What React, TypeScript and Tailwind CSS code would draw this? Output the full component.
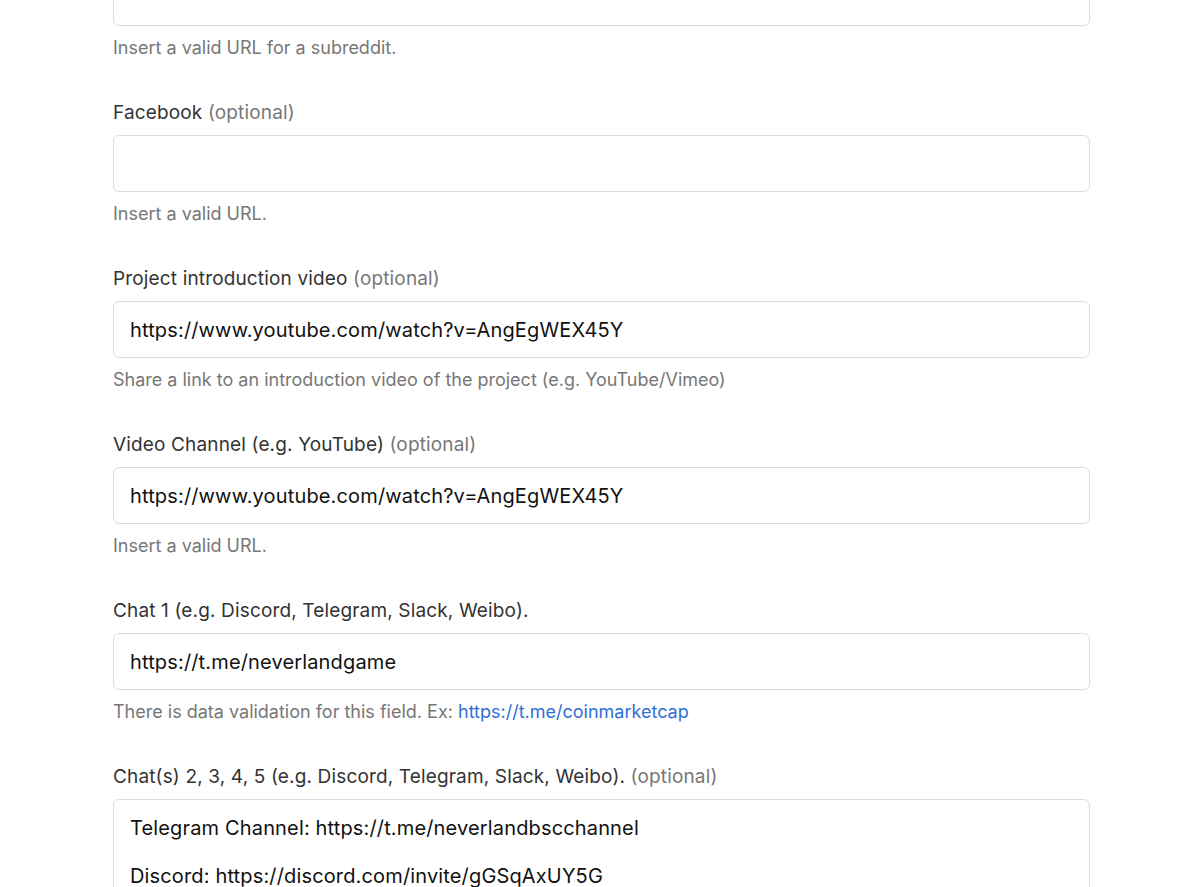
const fields = [
  {
    label: "Facebook",
    optional: true,
    value: "",
    help: "Insert a valid URL.",
  },
  {
    label: "Project introduction video",
    optional: true,
    value: "https://www.youtube.com/watch?v=AngEgWEX45Y",
    help: "Share a link to an introduction video of the project (e.g. YouTube/Vimeo)",
  },
  {
    label: "Video Channel (e.g. YouTube)",
    optional: true,
    value: "https://www.youtube.com/watch?v=AngEgWEX45Y",
    help: "Insert a valid URL.",
  },
  {
    label: "Chat 1 (e.g. Discord, Telegram, Slack, Weibo).",
    optional: false,
    value: "https://t.me/neverlandgame",
    help: null,
  },
];

function Input({ value }: { value: string }) {
  return (
    <div className="h-[57px] w-full rounded-[6px] border border-[#dcdcdc] bg-white px-[16px] flex items-center text-[20px] tracking-[0.15px] text-[#111]">
      {value}
    </div>
  );
}

export default function App() {
  return (
    <div
      className="h-[887px] w-[1200px] overflow-hidden bg-white"
      style={{ fontFamily: "Inter, 'Noto Sans', sans-serif" }}
    >
      <div className="ml-[113px] w-[977px] flex flex-col">
        {/* field cut off at the top */}
        <div className="-mt-[31px]">
          <Input value="" />
          <p className="mt-[10px] text-[18px] leading-[24px] text-[#777]">
            Insert a valid URL for a subreddit.
          </p>
        </div>

        {fields.map((f, i) => (
          <div key={i} className="mt-[41px]">
            <label className="block text-[19px] leading-[24px] tracking-[0.15px] text-[#333] mb-[10px]">
              {f.label}
              {f.optional && <span className="text-[#777]"> (optional)</span>}
            </label>
            <Input value={f.value} />
            <p className="mt-[10px] text-[18px] leading-[24px] text-[#777]">
              {f.help ?? (
                <>
                  There is data validation for this field. Ex:{" "}
                  <span className="text-[#2f6fd8]">https://t.me/coinmarketcap</span>
                </>
              )}
            </p>
          </div>
        ))}

        <div className="mt-[41px]">
          <label className="block text-[19px] leading-[24px] tracking-[0.15px] text-[#333] mb-[10px]">
            Chat(s) 2, 3, 4, 5 (e.g. Discord, Telegram, Slack, Weibo).
            <span className="text-[#777]"> (optional)</span>
          </label>
          <div className="h-[200px] w-full rounded-[6px] border border-[#dcdcdc] bg-white px-[16px] pt-[16px] text-[20px] leading-[24px] tracking-[0.15px] text-[#111] flex flex-col gap-[24px]">
            <p>Telegram Channel: https://t.me/neverlandbscchannel</p>
            <p>Discord: https://discord.com/invite/gGSqAxUY5G</p>
          </div>
        </div>
      </div>
    </div>
  );
}
